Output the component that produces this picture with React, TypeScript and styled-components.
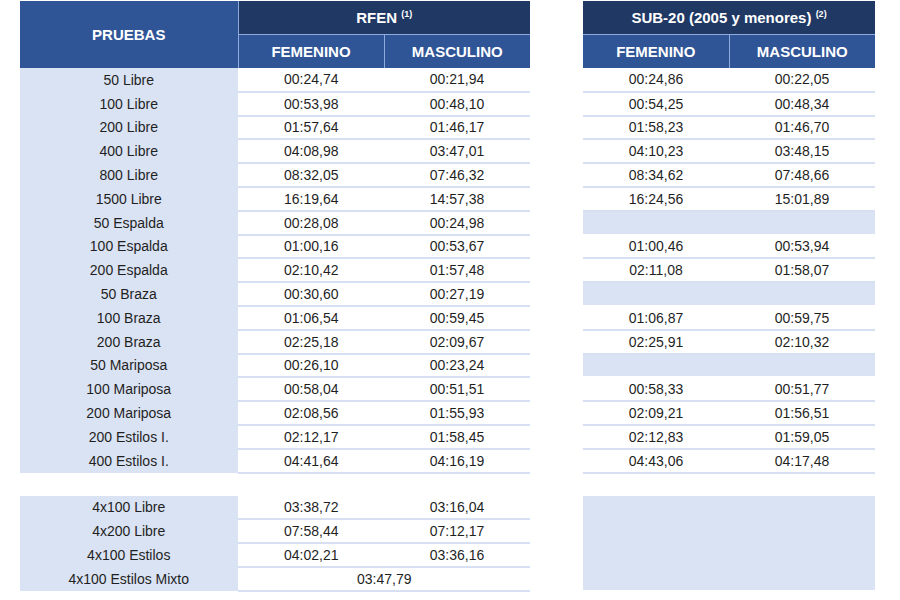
import styled, { createGlobalStyle } from "styled-components";

interface Row {
  event: string;
  rfen: [string, string];
  sub20?: [string, string];
}

const rows: Row[] = [
  { event: "50 Libre", rfen: ["00:24,74", "00:21,94"], sub20: ["00:24,86", "00:22,05"] },
  { event: "100 Libre", rfen: ["00:53,98", "00:48,10"], sub20: ["00:54,25", "00:48,34"] },
  { event: "200 Libre", rfen: ["01:57,64", "01:46,17"], sub20: ["01:58,23", "01:46,70"] },
  { event: "400 Libre", rfen: ["04:08,98", "03:47,01"], sub20: ["04:10,23", "03:48,15"] },
  { event: "800 Libre", rfen: ["08:32,05", "07:46,32"], sub20: ["08:34,62", "07:48,66"] },
  { event: "1500 Libre", rfen: ["16:19,64", "14:57,38"], sub20: ["16:24,56", "15:01,89"] },
  { event: "50 Espalda", rfen: ["00:28,08", "00:24,98"] },
  { event: "100 Espalda", rfen: ["01:00,16", "00:53,67"], sub20: ["01:00,46", "00:53,94"] },
  { event: "200 Espalda", rfen: ["02:10,42", "01:57,48"], sub20: ["02:11,08", "01:58,07"] },
  { event: "50 Braza", rfen: ["00:30,60", "00:27,19"] },
  { event: "100 Braza", rfen: ["01:06,54", "00:59,45"], sub20: ["01:06,87", "00:59,75"] },
  { event: "200 Braza", rfen: ["02:25,18", "02:09,67"], sub20: ["02:25,91", "02:10,32"] },
  { event: "50 Mariposa", rfen: ["00:26,10", "00:23,24"] },
  { event: "100 Mariposa", rfen: ["00:58,04", "00:51,51"], sub20: ["00:58,33", "00:51,77"] },
  { event: "200 Mariposa", rfen: ["02:08,56", "01:55,93"], sub20: ["02:09,21", "01:56,51"] },
  { event: "200 Estilos I.", rfen: ["02:12,17", "01:58,45"], sub20: ["02:12,83", "01:59,05"] },
  { event: "400 Estilos I.", rfen: ["04:41,64", "04:16,19"], sub20: ["04:43,06", "04:17,48"] },
];

const relays: Row[] = [
  { event: "4x100 Libre", rfen: ["03:38,72", "03:16,04"] },
  { event: "4x200 Libre", rfen: ["07:58,44", "07:12,17"] },
  { event: "4x100 Estilos", rfen: ["04:02,21", "03:36,16"] },
];

const GlobalStyle = createGlobalStyle`
  body {
    margin: 0;
    background: #ffffff;
    font-family: "Liberation Sans", Arial, sans-serif;
    color: #1f1f1f;
  }
`;

const Page = styled.div`
  display: flex;
  align-items: flex-start;
  gap: 53px;
  padding: 1px 0 0 20px;
  width: 900px;
  height: 600px;
  box-sizing: border-box;
`;

const Table = styled.table<{ $width: number }>`
  width: ${(p) => p.$width}px;
  border-collapse: collapse;
  table-layout: fixed;
  font-size: 14px;
`;

const HeadTop = styled.th`
  height: 33px;
  background: #203864;
  color: #ffffff;
  font-size: 15px;
  font-weight: 700;
  text-align: center;
  border-bottom: 1px solid #8faadc;
  padding: 0;

  sup {
    font-size: 9px;
    vertical-align: 6px;
  }
`;

const HeadCell = styled.th<{ $tall?: boolean }>`
  height: ${(p) => (p.$tall ? "67px" : "33px")};
  background: #2f5597;
  color: #ffffff;
  font-size: 15px;
  font-weight: 700;
  text-align: center;
  border-right: 1px solid #8faadc;
  padding: 0;

  &:last-child {
    border-right: none;
  }
`;

const BodyRow = styled.tr`
  height: 23.8px;
`;

const EventCell = styled.td`
  background: #dae3f3;
  text-align: center;
  padding: 0;
  border-right: 1px solid #ffffff;
`;

const TimeCell = styled.td`
  background: #ffffff;
  text-align: center;
  padding: 0;
  border-bottom: 2px solid #d6e0f2;
`;

const FillCell = styled.td`
  background: #dae3f3;
  padding: 0;
  border-bottom: 2px solid #ffffff;
`;

const SpacerRow = styled.tr`
  height: 23px;

  td {
    padding: 0;
  }
`;

export default function App() {
  return (
    <>
      <GlobalStyle />
      <Page>
        <Table $width={510}>
          <colgroup>
            <col style={{ width: 218 }} />
            <col style={{ width: 146 }} />
            <col style={{ width: 146 }} />
          </colgroup>
          <thead>
            <tr>
              <HeadCell rowSpan={2} $tall>
                PRUEBAS
              </HeadCell>
              <HeadTop colSpan={2}>
                RFEN <sup>(1)</sup>
              </HeadTop>
            </tr>
            <tr>
              <HeadCell>FEMENINO</HeadCell>
              <HeadCell>MASCULINO</HeadCell>
            </tr>
          </thead>
          <tbody>
            {rows.map((r) => (
              <BodyRow key={r.event}>
                <EventCell>{r.event}</EventCell>
                <TimeCell>{r.rfen[0]}</TimeCell>
                <TimeCell>{r.rfen[1]}</TimeCell>
              </BodyRow>
            ))}
            <SpacerRow>
              <td colSpan={3} />
            </SpacerRow>
            {relays.map((r) => (
              <BodyRow key={r.event}>
                <EventCell>{r.event}</EventCell>
                <TimeCell>{r.rfen[0]}</TimeCell>
                <TimeCell>{r.rfen[1]}</TimeCell>
              </BodyRow>
            ))}
            <BodyRow>
              <EventCell>4x100 Estilos Mixto</EventCell>
              <TimeCell colSpan={2}>03:47,79</TimeCell>
            </BodyRow>
          </tbody>
        </Table>

        <Table $width={292}>
          <colgroup>
            <col style={{ width: 146 }} />
            <col style={{ width: 146 }} />
          </colgroup>
          <thead>
            <tr>
              <HeadTop colSpan={2}>
                SUB-20 (2005 y menores) <sup>(2)</sup>
              </HeadTop>
            </tr>
            <tr>
              <HeadCell>FEMENINO</HeadCell>
              <HeadCell>MASCULINO</HeadCell>
            </tr>
          </thead>
          <tbody>
            {rows.map((r) =>
              r.sub20 ? (
                <BodyRow key={r.event}>
                  <TimeCell>{r.sub20[0]}</TimeCell>
                  <TimeCell>{r.sub20[1]}</TimeCell>
                </BodyRow>
              ) : (
                <BodyRow key={r.event}>
                  <FillCell colSpan={2} />
                </BodyRow>
              )
            )}
            <SpacerRow>
              <td colSpan={2} />
            </SpacerRow>
            <BodyRow>
              <FillCell colSpan={2} rowSpan={4} />
            </BodyRow>
            <BodyRow />
            <BodyRow />
            <BodyRow />
          </tbody>
        </Table>
      </Page>
    </>
  );
}
